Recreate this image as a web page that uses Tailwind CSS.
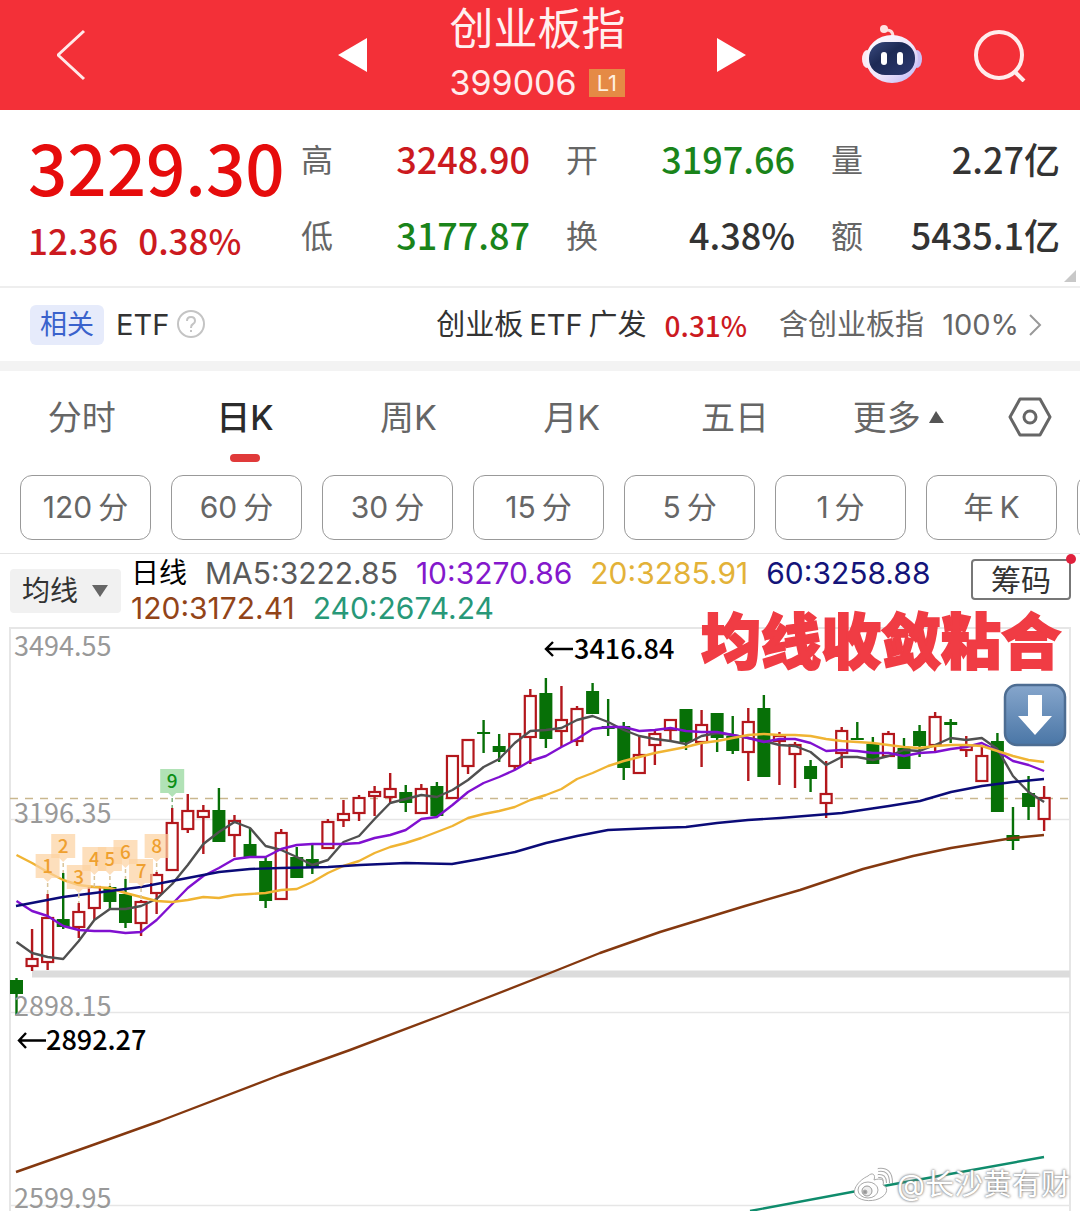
<!DOCTYPE html>
<html lang="zh-CN">
  <head>
    <meta charset="utf-8" />
    <meta name="viewport" content="width=device-width, initial-scale=1" />
    <title>创业板指 399006</title>
    <script src="https://cdn.jsdelivr.net/npm/@tailwindcss/browser@4"></script>
  </head>

  <body
    class="bg-white text-[#333] font-['Inter','Noto_Sans_CJK_SC',sans-serif] overflow-x-hidden"
  >
    <!-- Header -->
    <header
      class="grid grid-cols-[1fr_auto_1fr] items-center h-[110px] pl-[57px] pr-[54px] bg-[#f33038] text-white"
    >
      <button aria-label="返回" class="w-[30px]">
        <svg class="block" width="30" height="54" viewBox="0 0 30 54" fill="none" stroke="#ffe9e9" stroke-width="3">
          <path d="M27 3 L1 27 L27 51" />
        </svg>
      </button>
      <div class="flex items-center gap-[83px]">
        <button aria-label="上一个">
          <svg class="block" width="30" height="34" viewBox="0 0 30 34" fill="#fff"><path d="M30 0 V34 L1 17 Z" /></svg>
        </button>
        <div class="w-[184px]">
          <h1 class="text-[44px] leading-[48px] whitespace-nowrap text-[#fff0f0]">创业板指</h1>
          <div class="flex items-center gap-3 mt-2">
            <span class="text-[34px] leading-[44px] text-[#ffecec]">399006</span>
            <span class="bg-[#e58a45] px-2 text-[22px] leading-7 text-[#fff0e0]">L1</span>
          </div>
        </div>
        <button aria-label="下一个">
          <svg class="block" width="30" height="34" viewBox="0 0 30 34" fill="#fff"><path d="M0 0 V34 L29 17 Z" /></svg>
        </button>
      </div>
      <div class="flex items-center justify-end gap-[52px]">
        <button aria-label="智能助手">
          <svg class="block" width="60" height="60" viewBox="0 0 60 60">
            <defs>
              <linearGradient id="head" x1="0" y1="0" x2="1" y2="1">
                <stop offset="0" stop-color="#ffffff" />
                <stop offset="0.55" stop-color="#f0e6fb" />
                <stop offset="1" stop-color="#b9b4f5" />
              </linearGradient>
              <linearGradient id="face" x1="0" y1="0" x2="1" y2="1">
                <stop offset="0" stop-color="#3b4b80" />
                <stop offset="0.4" stop-color="#1d2a55" />
                <stop offset="1" stop-color="#2b3870" />
              </linearGradient>
            </defs>
            <path d="M23 5 Q31 4 31 12" fill="none" stroke="#ffdcdc" stroke-width="3" />
            <circle cx="22" cy="4" r="4" fill="#ffe3e3" />
            <ellipse cx="5" cy="34" rx="5" ry="9" fill="#fbeaf3" />
            <ellipse cx="55" cy="34" rx="5" ry="9" fill="#c9c0f6" />
            <ellipse cx="30" cy="34" rx="26" ry="24" fill="url(#head)" />
            <rect x="7" y="17" width="46" height="33" rx="16" fill="url(#face)" />
            <rect x="19" y="27" width="6" height="13" rx="3" fill="#fff" />
            <rect x="35" y="27" width="6" height="13" rx="3" fill="#fff" />
          </svg>
        </button>
        <button aria-label="搜索">
          <svg class="block" width="52" height="54" viewBox="0 0 52 54" fill="none" stroke="#ffecec" stroke-width="4">
            <circle cx="25" cy="27" r="23" />
            <path d="M41 44 L50 53" />
          </svg>
        </button>
      </div>
    </header>

    <!-- Quote -->
    <section
      class="relative flex pt-[10px] pb-[14px] pl-7 pr-5 border-b-2 border-[#eee] font-['Noto_Sans_CJK_SC',sans-serif] font-medium"
    >
      <div class="w-[273px] shrink-0 text-[#e60c0c]">
        <p class="pt-1 text-[69px] leading-[84px]">3229.30</p>
        <p class="flex gap-5 pt-1 text-[35px] leading-[56px] text-[#cc1a1f]"><span>12.36</span><span>0.38%</span></p>
      </div>
      <dl class="grid grid-cols-3 gap-x-9 flex-1 text-[36px] leading-[76px] whitespace-nowrap">
        <div class="flex justify-between">
          <dt class="text-[32px] font-normal text-[#666]">高</dt>
          <dd class="text-[#cc1a1f]">3248.90</dd>
        </div>
        <div class="flex justify-between">
          <dt class="text-[32px] font-normal text-[#666]">开</dt>
          <dd class="text-[#1a841a]">3197.66</dd>
        </div>
        <div class="flex justify-between">
          <dt class="text-[32px] font-normal text-[#666]">量</dt>
          <dd>2.27亿</dd>
        </div>
        <div class="flex justify-between">
          <dt class="text-[32px] font-normal text-[#666]">低</dt>
          <dd class="text-[#1a841a]">3177.87</dd>
        </div>
        <div class="flex justify-between">
          <dt class="text-[32px] font-normal text-[#666]">换</dt>
          <dd>4.38%</dd>
        </div>
        <div class="flex justify-between">
          <dt class="text-[32px] font-normal text-[#666]">额</dt>
          <dd>5435.1亿</dd>
        </div>
      </dl>
      <svg class="absolute right-1 bottom-1" width="12" height="12" viewBox="0 0 12 12" fill="#c8c8c8"><path d="M12 0 V12 H0 Z" /></svg>
    </section>

    <!-- Related ETF -->
    <section
      class="flex items-center h-[83px] pl-[30px] pr-[38px] border-b-10 border-[#f3f3f3] text-[29px] whitespace-nowrap"
    >
      <span class="rounded-md bg-[#e6ebfb] px-[10px] text-[27px] leading-10 text-[#3a62cc]">相关</span>
      <span class="ml-3">ETF</span>
      <button aria-label="说明" class="ml-2">
        <svg class="block" width="29" height="29" viewBox="0 0 29 29" fill="none" stroke="#c4c4c4" stroke-width="2">
          <circle cx="14" cy="14" r="13" />
          <path d="M10 11 Q10 7 14 7 Q18 7 18 11 Q18 13 16 14 Q14 15 14 18" />
          <path d="M14 20 V22" />
        </svg>
      </button>
      <a href="#" class="flex items-center ml-auto">
        <span class="flex gap-[6px]"><span>创业板</span><span>ETF</span><span>广发</span></span>
        <span class="ml-[18px] font-['Noto_Sans_CJK_SC',sans-serif] font-medium text-[28px] text-[#cc1a1f]">0.31%</span>
        <span class="ml-8 text-[#666]">含创业板指</span>
        <span class="ml-[18px] text-[#666]">100%</span>
        <svg class="ml-[10px]" width="13" height="24" viewBox="0 0 13 24" fill="none" stroke="#999" stroke-width="2"><path d="M1 2 L11 12 L1 22" /></svg>
      </a>
    </section>

    <!-- Period tabs -->
    <nav class="flex items-center h-[104px] text-[34px] text-[#666]">
      <div class="grid grid-cols-6 flex-1 h-full">
        <button class="pb-3">分时</button>
        <button class="relative pb-3 font-medium text-[#2b2b2b]">
          日K
          <span class="absolute left-1/2 top-[83px] w-[30px] h-2 -translate-x-1/2 rounded-full bg-[#e03a3a]"></span>
        </button>
        <button class="pb-3">周K</button>
        <button class="pb-3">月K</button>
        <button class="pb-3">五日</button>
        <button class="flex items-center justify-center gap-2 pb-3">
          更多
          <svg width="15" height="12" viewBox="0 0 15 12" fill="#555"><path d="M7 0 L15 12 H0 Z" /></svg>
        </button>
      </div>
      <button aria-label="设置" class="w-[100px] pb-3">
        <svg class="mx-auto" width="44" height="40" viewBox="0 0 44 40" fill="none" stroke="#666" stroke-width="3">
          <path d="M12 2 H32 L42 20 L32 38 H12 L2 20 Z" stroke-linejoin="round" />
          <circle cx="22" cy="20" r="6" />
        </svg>
      </button>
    </nav>

    <!-- Minute chips -->
    <div
      class="flex gap-5 pl-5 pb-[13px] overflow-hidden border-b border-[#e4e4e4] text-[30px] text-[#666] whitespace-nowrap"
    >
      <button class="flex items-center justify-center gap-[6px] w-[131px] h-[65px] shrink-0 rounded-xl border border-[#999]"><span>120</span><span>分</span></button>
      <button class="flex items-center justify-center gap-[6px] w-[131px] h-[65px] shrink-0 rounded-xl border border-[#999]"><span>60</span><span>分</span></button>
      <button class="flex items-center justify-center gap-[6px] w-[131px] h-[65px] shrink-0 rounded-xl border border-[#999]"><span>30</span><span>分</span></button>
      <button class="flex items-center justify-center gap-[6px] w-[131px] h-[65px] shrink-0 rounded-xl border border-[#999]"><span>15</span><span>分</span></button>
      <button class="flex items-center justify-center gap-[6px] w-[131px] h-[65px] shrink-0 rounded-xl border border-[#999]"><span>5</span><span>分</span></button>
      <button class="flex items-center justify-center gap-[6px] w-[131px] h-[65px] shrink-0 rounded-xl border border-[#999]"><span>1</span><span>分</span></button>
      <button class="flex items-center justify-center gap-[6px] w-[131px] h-[65px] shrink-0 rounded-xl border border-[#999]"><span>年</span><span>K</span></button>
      <button aria-label="更多周期" class="w-[131px] h-[65px] shrink-0 rounded-xl border border-[#999]"></button>
    </div>

    <!-- Moving averages -->
    <div class="flex items-start h-[73px] pl-[10px] pr-[9px]">
      <button class="flex items-center gap-[14px] mt-[15px] h-11 w-[111px] pl-3 shrink-0 rounded bg-[#f1f1f1] text-[28px] whitespace-nowrap">
        均线
        <svg width="16" height="12" viewBox="0 0 16 12" fill="#666"><path d="M0 0 H16 L8 12 Z" /></svg>
      </button>
      <div class="flex flex-wrap gap-x-[18px] flex-1 ml-[10px] pt-[2px] text-[30px] leading-[35px] whitespace-nowrap">
        <span class="text-[28px] text-black">日线</span>
        <span class="text-[#5a5a5a]">MA5:3222.85</span>
        <span class="text-[#8418cc]">10:3270.86</span>
        <span class="text-[#e3b238]">20:3285.91</span>
        <span class="text-[#14147a]">60:3258.88</span>
        <span class="text-[#924418]">120:3172.41</span>
        <span class="text-[#289878]">240:2674.24</span>
      </div>
      <button class="relative mt-[5px] w-[100px] h-[41px] shrink-0 rounded border-2 border-[#777] text-[30px] leading-9">
        筹码
        <span class="absolute -right-[7px] -top-[7px] size-[10px] rounded-full bg-[#e0203c]"></span>
      </button>
    </div>

    <!-- Chart -->
    <main class="relative">
      <svg id="chart" class="block w-full overflow-visible" viewBox="0 627 1080 584" font-family="Noto Sans CJK SC, sans-serif">
        <defs>
          <linearGradient id="key" x1="0" y1="0" x2="0" y2="1">
            <stop offset="0" stop-color="#86a6cc" />
            <stop offset="1" stop-color="#4a76a6" />
          </linearGradient>
        </defs>
        <g stroke="#e6e6e6" stroke-width="2">
          <path d="M10 1211 V628 H1070 V1211" fill="none" />
          <path d="M10 819.5 H1070 M10 1012.5 H1070 M10 1205.5 H1070" stroke-width="1.5" />
        </g>
        <path d="M32 974 H1070" stroke="#dcdcdc" stroke-width="7" />
        <path d="M10 798.5 H1070" stroke="#c9b78e" stroke-width="1.5" stroke-dasharray="8 7" />
        <g id="candles"></g>
        <g id="lines" fill="none" stroke-width="2.4" stroke-linejoin="round"></g>
        <g id="marks" font-size="19" text-anchor="middle"></g>
        <g font-size="27" fill="#999">
          <text x="14" y="656">3494.55</text>
          <text x="14" y="823">3196.35</text>
          <text x="14" y="1016">2898.15</text>
          <text x="14" y="1208">2599.95</text>
        </g>
        <g font-size="27" font-weight="500" fill="#000">
          <text x="574" y="659">3416.84</text>
          <text x="46" y="1050">2892.27</text>
        </g>
        <g fill="none" stroke="#000" stroke-width="2.4">
          <path d="M573 649 H546 M553 642 L546 649 L553 656" />
          <path d="M46 1040.5 H19 M26 1033 L19 1040.5 L26 1048" />
        </g>
        <rect x="1005" y="685" width="60" height="60" rx="12" fill="url(#key)" stroke="#4d6d92" stroke-width="2.5" />
        <path d="M1028 695 H1042 V716 H1052 L1035 735 L1018 716 H1028 Z" fill="#fff" />
      </svg>

      <p class="absolute right-[19px] -top-[19px] text-[60px] leading-[60px] font-black text-[#f03c44] font-['Noto_Sans_CJK_SC',sans-serif] whitespace-nowrap [-webkit-text-stroke:2px_#f03c44]">均线收敛粘合</p>

      <div class="absolute right-[10px] bottom-1 flex items-center gap-1 text-[29px] leading-[44px] text-white whitespace-nowrap [text-shadow:0_0_3px_#777,0_0_2px_#999]">
        <svg width="40" height="36" viewBox="0 0 40 36" fill="#fff" stroke="#aaa" stroke-width="1">
          <path d="M15 9 C19 5 23 7 21 13 C27 11 32 12 30 18 C35 20 35 26 29 30 C22 35 9 35 3 29 C-2 23 6 13 15 9 Z" />
          <ellipse cx="15" cy="23" rx="10" ry="8" />
          <circle cx="14" cy="24" r="5" fill="#eee" stroke="#999" />
          <circle cx="12" cy="25" r="2" fill="#999" />
          <path d="M25 9 Q32 8 32 16" fill="none" stroke="#aaa" stroke-width="4" />
          <path d="M25 9 Q32 8 32 16" fill="none" stroke="#fff" stroke-width="2" />
          <path d="M25 3 Q38 1 38 16" fill="none" stroke="#aaa" stroke-width="4" />
          <path d="M25 3 Q38 1 38 16" fill="none" stroke="#fff" stroke-width="2" />
        </svg>
        <span>@长沙黄有财</span>
      </div>
    </main>

    <script>
      // [up, high, body top, body bottom, low]
      var candles = [
        [0, 978, 980, 994, 1015], [1, 929, 959, 966, 971], [1, 894, 918, 962, 970],
        [0, 873, 919, 927, 929], [1, 903, 912, 927, 938], [1, 887, 887, 908, 920],
        [0, 886, 887, 902, 909], [0, 879, 894, 923, 928], [1, 900, 902, 923, 936],
        [1, 872, 875, 893, 914], [1, 808, 823, 870, 870], [1, 794, 811, 829, 833],
        [1, 805, 811, 817, 854], [0, 788, 810, 842, 842], [1, 815, 821, 835, 857],
        [0, 828, 844, 857, 857], [0, 856, 861, 901, 908], [1, 829, 833, 899, 899],
        [0, 847, 857, 878, 878], [0, 845, 859, 867, 874], [1, 819, 822, 848, 848],
        [1, 800, 814, 820, 827], [1, 795, 798, 813, 821], [1, 786, 792, 796, 816],
        [1, 773, 789, 797, 803], [0, 785, 792, 803, 812], [1, 784, 789, 813, 813],
        [0, 782, 786, 816, 817], [1, 756, 756, 798, 798], [1, 740, 740, 766, 774],
        [0, 720, 732, 734, 753], [0, 734, 746, 752, 762], [1, 734, 734, 766, 770],
        [1, 689, 696, 737, 764], [0, 678, 693, 739, 748], [1, 686, 720, 731, 747],
        [1, 706, 709, 741, 746], [0, 683, 691, 714, 714], [0, 699, 726, 729, 736],
        [0, 722, 726, 768, 780], [1, 735, 755, 773, 773], [1, 729, 734, 745, 765],
        [1, 720, 720, 730, 740], [0, 709, 709, 742, 750], [1, 710, 725, 742, 767],
        [0, 713, 713, 738, 752], [0, 716, 736, 751, 754], [1, 708, 722, 752, 781],
        [0, 695, 708, 777, 777], [1, 732, 736, 741, 785], [1, 742, 745, 754, 788],
        [0, 760, 766, 779, 792], [1, 761, 794, 803, 818], [1, 727, 731, 753, 768],
        [0, 722, 738, 740, 740], [0, 737, 744, 764, 764], [1, 731, 734, 756, 756],
        [0, 738, 748, 769, 769], [0, 725, 731, 746, 757], [1, 712, 717, 745, 751],
        [0, 719, 722, 725, 743], [1, 736, 746, 750, 757], [1, 746, 756, 781, 781],
        [0, 733, 741, 812, 812], [0, 807, 835, 841, 850], [0, 776, 793, 807, 820],
        [1, 786, 798, 819, 831],
      ];
      // one value per candle
      var ma5 = [
        942, 953, 957, 959, 941, 920, 909, 909, 906, 899, 884, 865, 844, 832, 822, 828, 846,
        850, 857, 865, 860, 842, 836, 819, 803, 799, 795, 797, 790, 780, 767, 759, 743, 731,
        730, 728, 720, 716, 722, 730, 736, 739, 741, 744, 736, 733, 735, 738, 741, 745, 746,
        752, 765, 757, 757, 760, 756, 750, 751, 745, 738, 740, 738, 749, 776, 792, 802,
      ];
      var ma10 = [
        901, 911, 916, 926, 930, 931, 931, 933, 932, 920, 904, 888, 876, 868, 859, 857, 857,
        849, 845, 844, 844, 844, 843, 838, 835, 830, 819, 817, 805, 792, 783, 777, 770, 761,
        756, 747, 739, 729, 727, 727, 731, 730, 728, 731, 732, 732, 735, 738, 742, 739, 739,
        743, 751, 750, 751, 753, 753, 756, 753, 752, 749, 747, 743, 751, 761, 765, 771,
      ];
      var ma20 = [
        855, 863, 872, 880, 885, 887, 888, 893, 897, 901, 902, 900, 897, 898, 895, 894, 893,
        890, 889, 882, 873, 866, 861, 853, 847, 843, 838, 832, 826, 818, 814, 811, 807, 800,
        795, 789, 779, 773, 766, 761, 757, 753, 750, 747, 743, 741, 738, 735, 734, 735, 735,
        736, 739, 741, 742, 743, 745, 747, 748, 746, 745, 745, 746, 751, 756, 760, 762,
      ];
      function x(i) {
        return 16.5 + i * 15.57;
      }
      function path(values) {
        return "M" + values.map(function (y, i) { return x(i) + " " + y; }).join("L");
      }

      document.getElementById("candles").innerHTML = candles
        .map(function (c, i) {
          var color = c[0] ? "#b3171c" : "#077007";
          var wick = `<path d="M${x(i)} ${c[1]}V${c[2]}M${x(i)} ${c[3]}V${c[4]}" stroke="${color}" stroke-width="2.4"/>`;
          var body = c[0]
            ? `<rect x="${x(i) - 5.5}" y="${c[2]}" width="11" height="${c[3] - c[2]}" fill="#fff" stroke="${color}" stroke-width="2.2"/>`
            : `<rect x="${x(i) - 6.5}" y="${c[2]}" width="13" height="${c[3] - c[2]}" fill="${color}"/>`;
          return wick + body;
        })
        .join("");

      var lines = [
        ["#505050", path(ma5)],
        ["#8010d0", path(ma10)],
        ["#f0b433", path(ma20)],
        ["#0b0b78", "M16 906L63 897L110 891L141 887L172 881L219 872L250 869L281 868L328 867L360 865L406 863L452 864L480 859L515 852L546 843L577 836L608 830L655 828L686 827L717 823L748 820L780 818L842 813L889 806L920 801L951 792L982 786L1013 782L1044 779"],
        ["#84380f", "M16 1172L90 1146L160 1121L280 1075L350 1050L440 1016L545 975L600 953L660 932L745 906L800 890L863 869L913 856L951 848L982 843L1013 838L1044 835"],
        ["#0f8c6c", "M750 1211L900 1183L1044 1157"],
      ];
      document.getElementById("lines").innerHTML = lines
        .map(function (l) { return `<path stroke="${l[0]}" d="${l[1]}"/>`; })
        .join("");

      // sequence marks: candle index, centre y
      var marks = [[2, 866], [3, 846], [4, 877], [5, 859], [6, 859], [7, 852], [8, 871], [9, 846], [10, 781]];
      document.getElementById("marks").innerHTML = marks
        .map(function (m, n) {
          var last = n === 8;
          var bg = last ? "#a9dfae" : "#fcd2a0";
          var fg = last ? "#0b8f16" : "#efa02f";
          var cx = x(m[0]);
          return `<path d="M${cx} ${m[1] + 17}V${candles[m[0]][1]}" stroke="${last ? "#7cb07c" : "#d9c49a"}" stroke-width="1.5" stroke-dasharray="4 3"/>
            <path d="M${cx - 12} ${m[1] - 12}h24v24h-8l-4 4l-4 -4h-8z" fill="${bg}" fill-opacity="${last ? 0.9 : 0.7}"/>
            <text x="${cx}" y="${m[1] + 7}" fill="${fg}" font-weight="500">${n + 1}</text>`;
        })
        .join("");
    </script>
  </body>
</html>
